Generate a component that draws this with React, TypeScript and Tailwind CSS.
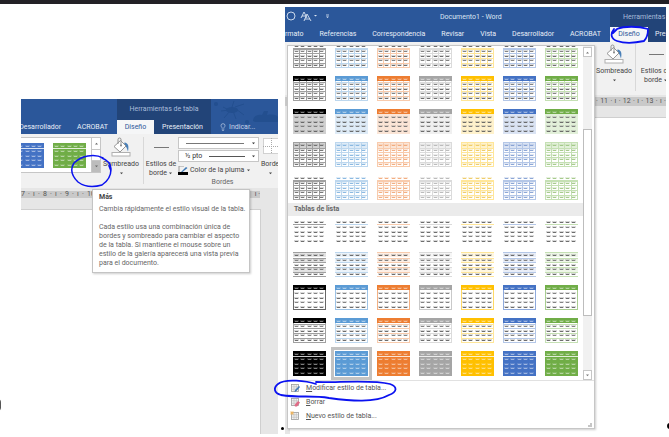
import React from "react";
import { Lightbulb } from "lucide-react";

type Palette = { name: string; main: string; light: string; tint: string; dash: string };

const palettes: Palette[] = [
  { name: "Negro", main: "#000000", light: "#a0a0a0", tint: "#d0d0d0", dash: "#666666" },
  { name: "Azul claro", main: "#5b9bd5", light: "#bdd7ee", tint: "#deebf7", dash: "#7fb2de" },
  { name: "Naranja", main: "#ed7d31", light: "#f8cbad", tint: "#fbe5d6", dash: "#f0a573" },
  { name: "Gris", main: "#a5a5a5", light: "#dbdbdb", tint: "#f0f0f0", dash: "#b4b4b4" },
  { name: "Oro", main: "#ffc000", light: "#ffe699", tint: "#fff2cc", dash: "#ecc75a" },
  { name: "Azul", main: "#4472c4", light: "#b4c7e7", tint: "#dae3f3", dash: "#7f9bd0" },
  { name: "Verde", main: "#70ad47", light: "#c5e0b4", tint: "#e2f0d9", dash: "#9cc480" },
];

type Kind = "grid" | "headGrid" | "headTint" | "softBand" | "softGrid" | "plain" | "lines" | "box" | "boxLines" | "solid";

const gridKinds: Kind[] = ["grid", "headGrid", "headTint", "softBand", "softGrid"];
const listKinds: Kind[] = ["plain", "lines", "box", "boxLines", "solid"];

const dashRows = [3, 8, 13, 17, 22];
const dashCols = [2, 8, 15, 21, 27];
const ruleRows = [6, 10, 15, 20];
const ruleCols = [6, 13, 19, 26];

function TableThumb({ kind, p }: { kind: Kind; p: Palette }) {
  const head = kind === "headGrid" || kind === "headTint" || kind === "box" || kind === "boxLines";
  const verticals = kind === "grid" || kind === "headGrid" || kind === "softBand" || kind === "softGrid";
  const horizontals = verticals || kind === "boxLines" || kind === "lines";
  const frame = verticals || kind === "box" || kind === "boxLines";
  const soft = kind === "softBand" || kind === "softGrid";
  const top = kind === "softGrid" || kind === "grid" ? 5 : 0;
  const dashColor = (row: number) => {
    if (kind === "solid" || (head && row === 0)) return "#ffffff";
    if (soft) return p.dash;
    return row % 2 === 0 ? "#5c5c5c" : "#747474";
  };
  const pale = (row: number) => kind === "solid" || (head && row === 0);
  return (
    <svg viewBox="0 0 33 25" className="block h-[25px] w-[33px] shrink-0" aria-hidden="true">
      <rect width="33" height="25" fill={kind === "solid" ? p.main : kind === "headTint" ? p.tint : "#ffffff"} />
      {kind === "softBand" && <rect width="33" height="6" fill={p.tint} />}
      {kind === "lines" && [1, 6, 16].map((y) => <rect key={y} y={y} width="33" height="4" fill={p.tint} opacity="0.6" />)}
      {horizontals && ruleRows.map((y) => <rect key={y} y={y} width="33" height="1" fill={p.light} />)}
      {kind === "lines" && [0, 24].map((y) => <rect key={y} y={y} width="33" height="1" fill={p.light} />)}
      {verticals && ruleCols.map((x) => <rect key={x} x={x} y={top} width="1" height={25 - top} fill={p.light} />)}
      {frame && (
        <rect x="0.5" y={top + 0.5} width="32" height={24 - top} fill="none" stroke={kind === "box" ? p.main : p.light} strokeOpacity={kind === "box" ? 0.6 : 1} />
      )}
      {head && <rect width="33" height="5" fill={p.main} />}
      {kind === "plain" && <rect y="5" width="33" height="1" fill={p.light} />}
      {kind === "solid" && <rect y="5" width="33" height="1" fill="#ffffffcc" />}
      {dashRows.map((y, r) =>
        dashCols.map((x) => (
          <g key={`${x}-${y}`} fill={dashColor(r)} opacity={pale(r) ? 0.55 : 1}>
            <rect x={x - 1} y={y - 1} width="5" height="2" opacity="0.25" />
            <rect x={x} y={y} width="3" height="1" opacity="0.85" />
          </g>
        )),
      )}
    </svg>
  );
}

function StyleRows({ kinds }: { kinds: Kind[] }) {
  return (
    <div className="grid grid-cols-[repeat(7,33px)] gap-x-[9px] gap-y-2">
      {kinds.map((kind) =>
        palettes.map((p) => (
          <button
            key={kind + p.name}
            type="button"
            aria-label={`Estilo de tabla ${p.name}`}
            className={kind === "solid" && p.name === "Azul claro" ? "outline-3 outline-offset-1 outline-[#c3c3c3]" : ""}
          >
            <TableThumb kind={kind} p={p} />
          </button>
        )),
      )}
    </div>
  );
}

function Caret({ className = "" }: { className?: string }) {
  return (
    <svg viewBox="0 0 5 3" className={`h-[3px] w-[5px] shrink-0 ${className}`} aria-hidden="true">
      <path d="M1 0.500h3L2.500 2.300z" fill="currentColor" />
    </svg>
  );
}

function BucketIcon() {
  return (
    <svg viewBox="0 0 20 20" className="h-5 w-5" aria-hidden="true">
      <path d="M13.500 5.500c4 .5 4.500 4 3.500 9-1-2.500-1-5-4-6z" fill="#4a80b8" />
      <path d="M3 9.500 9.500 3.500 15 9l-6 6z" fill="#fff" stroke="#8a8a8a" strokeWidth="0.900" />
      <path d="M7 7V2.500a1.500 1.500 0 0 1 3 0V8" fill="none" stroke="#8a8a8a" strokeWidth="0.900" />
      <circle cx="10" cy="8.500" r="0.900" fill="#777" />
      <rect x="1" y="15.500" width="18" height="3.500" fill="#fff" stroke="#b0b0b0" />
    </svg>
  );
}

function ShadingButton() {
  return (
    <button type="button" className="flex w-10 shrink-0 flex-col items-center text-[#444]">
      <BucketIcon />
      <span className="mt-[3px] leading-[9px]">Sombreado</span>
      <Caret className="mt-[3px]" />
    </button>
  );
}

function BorderStylesButton() {
  return (
    <button type="button" className="flex w-[34px] shrink-0 flex-col items-center text-[#444]">
      <span className="flex h-5 items-center">
        <span className="h-px w-[15px] bg-[#777]" />
      </span>
      <span className="mt-[3px] leading-[9px] whitespace-nowrap">Estilos de</span>
      <span className="flex items-center gap-px leading-[9px]">
        borde
        <Caret />
      </span>
    </button>
  );
}

function RibbonTab({ label, active = false, className = "" }: { label: string; active?: boolean; className?: string }) {
  return (
    <button
      type="button"
      role="tab"
      aria-selected={active}
      className={`h-full shrink-0 whitespace-nowrap ${active ? "bg-[#f5f6f7] text-[#2b579a]" : "text-[#e8eef7]"} ${className}`}
    >
      {label}
    </button>
  );
}

function Doodles() {
  return (
    <svg viewBox="0 0 67 35" className="h-[35px] w-[67px] shrink-0" aria-hidden="true">
      <g fill="#234f8f">
        <circle cx="5" cy="5" r="2" />
        <circle cx="36" cy="23" r="2" />
        <path d="M42 22c0-5 5-7 9-6l2-4h4l-1 4c6-1 10 0 11 2v5H44z" />
        <ellipse cx="21" cy="11" rx="6" ry="3" />
      </g>
      <path d="m12 8 6 3-8 1m9 0-6 7m9-7 3 8m0-10 8 6m-9-8 9-3m-12 3 2-6" fill="none" stroke="#234f8f" />
    </svg>
  );
}

function LeftWindow() {
  return (
    <section aria-label="Herramientas de tabla" className="relative mt-[95px] flex min-w-0 flex-[257] flex-col">
      <header className="relative flex h-[35px] overflow-hidden bg-[#2b579a]">
        <div className="flex w-[96px] shrink-0 items-end justify-end pr-[9px]">
          <div className="flex h-[14px] gap-4">
            <RibbonTab label="Desarrollador" />
            <RibbonTab label="ACROBAT" />
          </div>
        </div>
        <div className="flex w-[94px] shrink-0 flex-col bg-[#224478]">
          <span className="flex h-[21px] items-center justify-center text-[#a9bcd8]">Herramientas de tabla</span>
          <div className="flex h-[14px]">
            <RibbonTab label="Diseño" active className="w-[37px]" />
            <RibbonTab label="Presentación" className="flex-1" />
          </div>
        </div>
        <div className="grid min-w-0 flex-1 overflow-hidden">
          <div className="col-start-1 row-start-1">
            <Doodles />
          </div>
          <label className="col-start-1 row-start-1 flex h-[14px] items-center gap-[2px] self-end pl-2 text-[#c5d3e8]">
            <Lightbulb className="h-2 w-2" />
            <input aria-label="Indicar" placeholder="Indicar..." className="w-10 bg-transparent placeholder:text-[#c5d3e8]" />
          </label>
        </div>
      </header>

      <div className="flex h-[54px] overflow-hidden bg-[#f1f1f1] pt-[3px]">
        <div className="flex h-[36px] w-[80px] shrink-0 border-y border-[#c6c6c6] bg-white">
          <div className="flex w-[70px] items-center justify-end gap-[9px] overflow-hidden pr-[5px]">
            <TableThumb kind="solid" p={palettes[5]} />
            <TableThumb kind="solid" p={palettes[6]} />
          </div>
          <div className="flex w-[10px] flex-col border-x border-[#c6c6c6] text-[#666]">
            <button type="button" aria-label="Anterior" className="flex flex-1 items-center justify-center">
              <Caret className="rotate-180" />
            </button>
            <button type="button" aria-label="Siguiente" className="flex-1 border-y border-[#c6c6c6]" />
            <button type="button" aria-label="Más" className="flex flex-1 items-center justify-center bg-[#bcbcbc]">
              <Caret />
            </button>
          </div>
        </div>
        <ShadingButton />
        <div className="mb-1 ml-[2px] w-px shrink-0 bg-[#d8d8d8]" />
        <BorderStylesButton />
        <div className="flex w-[81px] shrink-0 flex-col text-[#333]">
          <div className="flex h-3 items-center border border-[#c6c6c6] bg-white pr-[2px] pl-[7px]">
            <select aria-label="Estilo de pluma" className="h-px w-[58px] appearance-none bg-[#777]">
              <option aria-label="Línea sencilla" />
            </select>
            <Caret className="ml-auto" />
          </div>
          <div className="mt-px flex h-3 items-center border border-[#c6c6c6] bg-white pr-[2px] pl-[6px]">
            <select aria-label="Grosor de pluma" className="w-6 appearance-none">
              <option>½ pto</option>
            </select>
            <span className="h-px w-9 bg-[#555]" />
            <Caret className="ml-auto" />
          </div>
          <button type="button" className="mt-[3px] flex h-[10px] items-center gap-[2px] whitespace-nowrap text-[#444]">
            <svg viewBox="0 0 10 9" className="h-[9px] w-[10px] shrink-0" aria-hidden="true">
              <path d="M1 0h5M1 0v6" stroke="#999" fill="none" />
              <path d="m3 6 5-5 1.500 1L4.500 6z" fill="#3f79b5" />
              <rect y="6" width="10" height="3" fill="#000" />
            </svg>
            Color de la pluma
            <Caret />
          </button>
          <span className="mt-[3px] pl-2 text-center leading-[9px] text-[#666]">Bordes</span>
        </div>
        <button type="button" className="ml-[2px] flex w-5 shrink-0 flex-col items-start text-[#444]">
          <svg viewBox="0 0 17 18" className="ml-[2px] h-[18px] w-[17px]" aria-hidden="true">
            <rect x="0.500" y="1.500" width="16" height="15" fill="#fff" stroke="#aaa" strokeDasharray="1 1" />
            <path d="M8.500 1v16M0 9.500h17" stroke="#aaa" strokeDasharray="1 1" />
          </svg>
          <span className="mt-[5px] leading-[9px]">Borde</span>
          <Caret className="mt-[3px] ml-[7px]" />
        </button>
      </div>

      <div className="flex flex-1 flex-col bg-[#e6e6e6] pt-[3px]">
        <div className="mr-[18px] flex h-[7px] items-center justify-between overflow-hidden bg-[#c9c9c9] leading-[7px] text-[#555]">
          <div className="flex w-[74px] justify-between">
            {["7", "·", "ı", "·", "8", "·", "ı", "·", "9", "·", "ı", "·", "10"].map((mark, i) => (
              <span key={i}>{mark}</span>
            ))}
          </div>
          <span>ı ·</span>
        </div>
        <div className="mt-[11px] mr-[17px] flex-1 border-t border-r border-[#cfcfcf] bg-white" />
      </div>

      <div role="tooltip" className="absolute top-[90px] left-[71px] w-[158px] border border-[#c4c4c4] bg-white pt-[3px] pr-1 pb-1 pl-[6px] leading-[9px] text-[#666] shadow-[1px_1px_2px_#0003]">
        <p className="font-bold text-[#444]">Más</p>
        <p className="mt-[3px] whitespace-nowrap">Cambia rápidamente el estilo visual de la tabla.</p>
        <p className="mt-[9px] whitespace-nowrap">
          Cada estilo usa una combinación única de
          <br />
          bordes y sombreado para cambiar el aspecto
          <br />
          de la tabla. Si mantiene el mouse sobre un
          <br />
          estilo de la galería aparecerá una vista previa
          <br />
          para el documento.
        </p>
      </div>

      <svg viewBox="0 0 44 36" className="pointer-events-none absolute top-[54px] left-[49px] h-9 w-11" fill="none" aria-hidden="true">
        <path d="M33 5C24 0 11 3 4 10c-4 6-2 13 4 19 8 6 17 5 24 3 6-4 9-10 9-16 0-5-4-9-9-11m7 8 2 5" stroke="#0b12f0" strokeWidth="1.500" strokeLinecap="round" />
      </svg>
    </section>
  );
}

function MenuIcon({ kind }: { kind: "edit" | "erase" | "new" }) {
  return (
    <svg viewBox="0 0 10 10" className="h-[10px] w-[10px] shrink-0" aria-hidden="true">
      <rect x="1.500" y="1.500" width="7" height="7" fill="#f4f4f4" stroke="#9a9a9a" strokeWidth="0.800" />
      <path d="M1.500 3.800h7M1.500 6.200h7M4 2v6.500M6.300 2v6.500" stroke="#b5b5b5" strokeWidth="0.600" />
      {kind === "edit" && <path d="m4.500 9 .5-2 4-4 1 1-4 4.500z" fill="#3f79b5" />}
      {kind === "erase" && <path d="m4.500 8 3.500-4 2 1.500L7 9.500H5z" fill="#e06a86" />}
      {kind === "new" && <path d="M2 0v4M0 2h4M.6.6l2.800 2.800M3.400.6.600 3.400" stroke="#f0b45a" strokeWidth="0.800" />}
    </svg>
  );
}

function MenuItem({ kind, first, rest }: { kind: "edit" | "erase" | "new"; first: string; rest: string }) {
  return (
    <button type="button" role="menuitem" className="flex h-[14px] w-full items-center gap-[6px] pl-[2px] text-left text-[#555]">
      <MenuIcon kind={kind} />
      <span>
        <span className="underline">{first}</span>
        {rest}
      </span>
    </button>
  );
}

function StylesMenu() {
  return (
    <div className="absolute top-[38px] left-[2px] w-[308px] border border-[#c6c6c6] bg-white shadow-[1px_1px_2px_#0003]">
      <div className="flex h-[335px] border-b border-[#e1e1e1]">
        <div className="min-w-0 flex-1 overflow-hidden">
          <div className="-mt-[3px] pl-[5px]">
            <StyleRows kinds={gridKinds} />
          </div>
          <h2 className="mt-[3px] h-[13px] bg-[#ebebeb] pl-[6px] leading-[13px] font-bold text-[#666]">Tablas de lista</h2>
          <div className="mt-[3px] pl-[5px]">
            <StyleRows kinds={listKinds} />
          </div>
        </div>
        <div className="mr-[2px] flex w-[9px] flex-col bg-[#f1f1f1] text-[#777]">
          <button type="button" aria-label="Desplazar arriba" className="mt-px flex h-[10px] items-center justify-center border border-[#c6c6c6] bg-white">
            <Caret className="rotate-180" />
          </button>
          <div className="mt-[72px] h-[187px] border border-[#bdbdbd] bg-white" />
          <button type="button" aria-label="Desplazar abajo" className="mt-auto flex h-[10px] items-center justify-center border border-[#c6c6c6] bg-white">
            <Caret />
          </button>
        </div>
      </div>
      <div role="menu" className="pb-[5px]">
        <MenuItem kind="edit" first="M" rest="odificar estilo de tabla..." />
        <MenuItem kind="erase" first="B" rest="orrar" />
        <MenuItem kind="new" first="N" rest="uevo estilo de tabla..." />
      </div>
      <svg viewBox="0 0 4 4" className="absolute right-[2px] bottom-[1px] h-1 w-1" aria-hidden="true">
        <path d="M2 0h2v4H0V2h2z" fill="#c6c6c6" />
      </svg>
    </div>
  );
}

function RightWindow() {
  return (
    <section aria-label="Documento1 - Word" className="relative mt-[3px] flex min-w-0 flex-[381] flex-col">
      <header className="flex h-[35px] overflow-hidden bg-[#2b579a]">
        <div className="flex w-[325px] shrink-0 flex-col">
          <div className="flex h-5 items-center text-[#dbe5f3]">
            <svg viewBox="0 0 48 14" className="h-[14px] w-12" fill="none" stroke="currentColor" aria-hidden="true">
              <circle cx="6" cy="6" r="4" strokeWidth="0.900" />
              <path d="m16 8 3-6 3 6m-5-2h4m-2 5 3-7 4 7m-6-2h5" strokeWidth="0.900" />
              <path d="M29 5h3l-1.500 1.500zM41 6.500h3l-1.500 1.500z" fill="currentColor" stroke="none" />
              <path d="M41 5h3" strokeWidth="0.800" />
            </svg>
            <h1 className="ml-[107px] whitespace-nowrap">Documento1 - Word</h1>
          </div>
          <div role="tablist" className="flex h-[15px] justify-between pr-[9px]">
            <RibbonTab label="rmato" />
            <RibbonTab label="Referencias" />
            <RibbonTab label="Correspondencia" />
            <RibbonTab label="Revisar" />
            <RibbonTab label="Vista" />
            <RibbonTab label="Desarrollador" />
            <RibbonTab label="ACROBAT" />
          </div>
        </div>
        <div className="flex min-w-0 flex-1 flex-col overflow-hidden bg-[#224478]">
          <span className="flex h-5 shrink-0 items-center pl-[13px] whitespace-nowrap text-[#a9bcd8]">Herramientas de</span>
          <div className="flex h-[15px]">
            <RibbonTab label="Diseño" active className="w-[38px]" />
            <RibbonTab label="Pres" className="pl-[7px]" />
          </div>
        </div>
      </header>
      <div className="flex h-[53px] overflow-hidden bg-[#f1f1f1] pt-[2px] pl-[309px]">
        <ShadingButton />
        <div className="mb-1 ml-px w-px shrink-0 bg-[#d8d8d8]" />
        <div className="pl-[3px]">
          <BorderStylesButton />
        </div>
      </div>
      <div className="flex flex-1 flex-col bg-[#e6e6e6] pt-[2px]">
        <div className="flex h-[9px] justify-between overflow-hidden bg-[#c9c9c9] pl-[311px] leading-[9px] text-[#555]">
          {["·", "11", "·", "ı", "·", "12", "·", "ı", "·", "13", "·", "ı", "·"].map((mark, i) => (
            <span key={i}>{mark}</span>
          ))}
        </div>
        <div className="mt-[11px] ml-[5px] flex-1 border-t border-[#cfcfcf] bg-white" />
      </div>
      <StylesMenu />

      <svg viewBox="0 0 40 20" className="pointer-events-none absolute top-[18px] left-[325px] h-5 w-10" fill="none" aria-hidden="true">
        <path d="M4 4C0 9 1 14 7 16c9 3 18 2 27 0 4-4 4-8 4-12C28 1 14 1 7 4L3 8" stroke="#0b12f0" strokeWidth="1.800" strokeLinecap="round" />
      </svg>
      <svg viewBox="0 0 126 26" className="pointer-events-none absolute top-[371px] -left-[12px] h-[26px] w-[126px]" fill="none" aria-hidden="true">
        <path d="M43 6C34 3 12 0 5 6 0 10 1 15 8 17c18 3 32 0 48 3 22 3 46 5 60-3 8-3 9-8 1-11C98 1 62 5 43 4" stroke="#0b12f0" strokeWidth="1.800" strokeLinecap="round" />
      </svg>
    </section>
  );
}

export default function App() {
  return (
    <div className="relative flex min-h-screen flex-col overflow-hidden bg-white font-['Roboto','Noto_Sans',sans-serif] text-[7px] leading-[9px]">
      <div className="h-1 bg-[#232126]" />
      <main className="flex flex-1 gap-[7px] pr-[3px] pb-[3px] pl-[21px]">
        <LeftWindow />
        <RightWindow />
      </main>
      <span className="absolute bottom-[26px] -left-[6px] h-3 w-[7px] rounded-full bg-[#555]" />
      <span className="absolute bottom-[7px] left-[281px] h-[3px] w-[3px] rounded-full bg-black" />
      <span className="absolute -right-[4px] bottom-[8px] h-[6px] w-[6px] rounded-full bg-black" />
    </div>
  );
}
